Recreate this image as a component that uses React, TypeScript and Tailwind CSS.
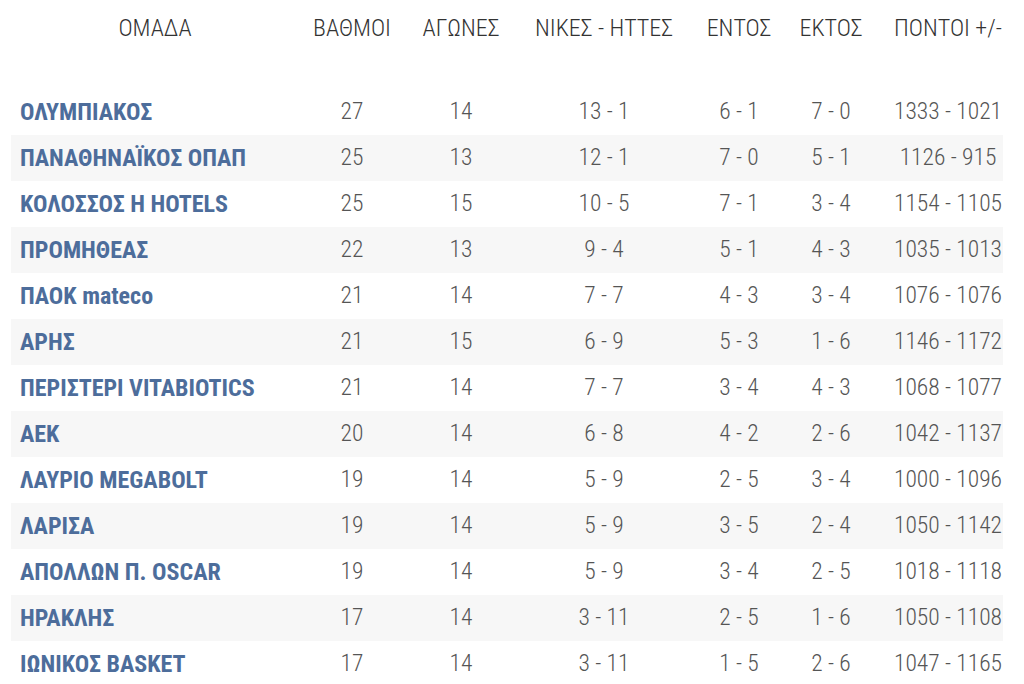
import React from 'react'

const rows: [string, string, string, string, string, string, string][] = [
  ['ΟΛΥΜΠΙΑΚΟΣ', '27', '14', '13 - 1', '6 - 1', '7 - 0', '1333 - 1021'],
  ['ΠΑΝΑΘΗΝΑΪΚΟΣ ΟΠΑΠ', '25', '13', '12 - 1', '7 - 0', '5 - 1', '1126 - 915'],
  ['ΚΟΛΟΣΣΟΣ H HOTELS', '25', '15', '10 - 5', '7 - 1', '3 - 4', '1154 - 1105'],
  ['ΠΡΟΜΗΘΕΑΣ', '22', '13', '9 - 4', '5 - 1', '4 - 3', '1035 - 1013'],
  ['ΠΑΟΚ mateco', '21', '14', '7 - 7', '4 - 3', '3 - 4', '1076 - 1076'],
  ['ΑΡΗΣ', '21', '15', '6 - 9', '5 - 3', '1 - 6', '1146 - 1172'],
  ['ΠΕΡΙΣΤΕΡΙ VITABIOTICS', '21', '14', '7 - 7', '3 - 4', '4 - 3', '1068 - 1077'],
  ['ΑΕΚ', '20', '14', '6 - 8', '4 - 2', '2 - 6', '1042 - 1137'],
  ['ΛΑΥΡΙΟ MEGABOLT', '19', '14', '5 - 9', '2 - 5', '3 - 4', '1000 - 1096'],
  ['ΛΑΡΙΣΑ', '19', '14', '5 - 9', '3 - 5', '2 - 4', '1050 - 1142'],
  ['ΑΠΟΛΛΩΝ Π. OSCAR', '19', '14', '5 - 9', '3 - 4', '2 - 5', '1018 - 1118'],
  ['ΗΡΑΚΛΗΣ', '17', '14', '3 - 11', '2 - 5', '1 - 6', '1050 - 1108'],
  ['ΙΩΝΙΚΟΣ BASKET', '17', '14', '3 - 11', '1 - 5', '2 - 6', '1047 - 1165'],
]

const cols = 'grid grid-cols-[288px_106px_112px_174px_96px_88px_128px]'

export default function App() {
  return (
    <div
      className="h-[684px] w-[1024px] overflow-hidden bg-white"
      style={{ fontFamily: '"Roboto Condensed", "Liberation Sans Narrow", Roboto, sans-serif' }}
    >
      <div className="ml-[11px] w-[992px]">
        <div className={`${cols} h-[56px] items-center text-[24px] font-light text-[#333]`}>
          <div className="text-center">ΟΜΑΔΑ</div>
          <div className="text-center">ΒΑΘΜΟΙ</div>
          <div className="text-center">ΑΓΩΝΕΣ</div>
          <div className="text-center">ΝΙΚΕΣ - ΗΤΤΕΣ</div>
          <div className="text-center">ΕΝΤΟΣ</div>
          <div className="text-center">ΕΚΤΟΣ</div>
          <div className="pl-[18px] text-center whitespace-nowrap">ΠΟΝΤΟΙ +/-</div>
        </div>
        <div className="mt-[33px]">
          {rows.map((r, i) => (
            <div
              key={r[0]}
              className={`${cols} h-[46px] items-center text-[23.5px] font-light text-[#555] ${i % 2 === 1 ? 'bg-[#f7f7f7]' : ''}`}
            >
              <div className="pl-[9px] text-[24px] font-bold whitespace-nowrap text-[#4d6d9b]">{r[0]}</div>
              <div className="text-center">{r[1]}</div>
              <div className="text-center">{r[2]}</div>
              <div className="text-center">{r[3]}</div>
              <div className="text-center">{r[4]}</div>
              <div className="text-center">{r[5]}</div>
              <div className="pl-[18px] text-center whitespace-nowrap">{r[6]}</div>
            </div>
          ))}
        </div>
      </div>
    </div>
  )
}
